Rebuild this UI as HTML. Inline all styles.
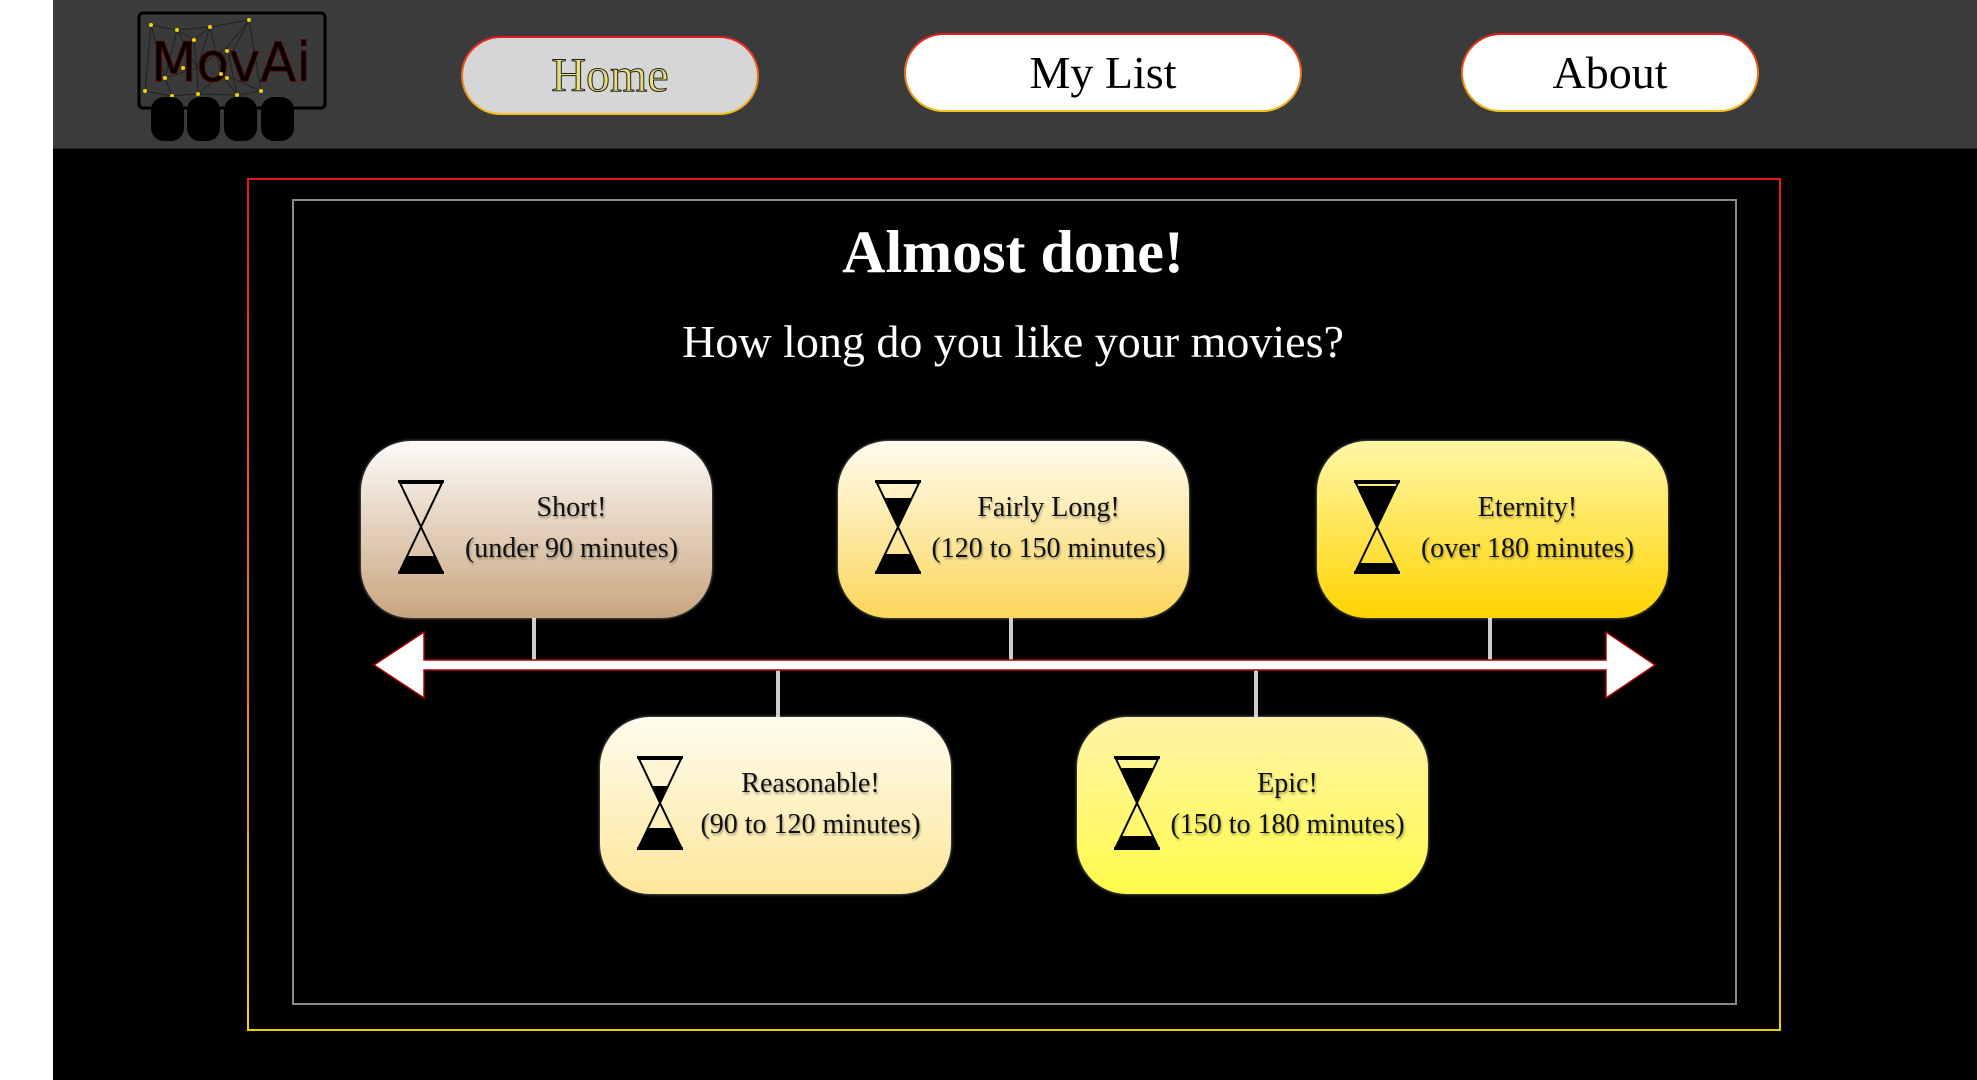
<!DOCTYPE html>
<html><head><meta charset="utf-8"><style>
*{margin:0;padding:0;box-sizing:border-box}
body{width:1977px;height:1080px;background:#000;position:relative;overflow:hidden;font-family:"Liberation Serif",serif}
.abs{position:absolute}
#white{left:0;top:0;width:53px;height:1080px;background:#fff}
#hdr{left:53px;top:0;width:1924px;height:149px;background:#3b3b3b;border-bottom:1px solid #222}
.btn{position:absolute;border-radius:40px;display:flex;align-items:center;justify-content:center;font-size:46px;color:#000;border:2px solid transparent}
.card{position:absolute;width:351px;height:177px;border-radius:50px;box-shadow:0 0 3px #fff8}
.card svg{position:absolute;left:37px;top:39px}
.card .t{position:absolute;left:70px;right:0;top:46px;text-align:center;font-size:28px;line-height:41px;color:#111;text-shadow:1px 2px 2px rgba(0,0,0,.35)}
.conn{position:absolute;width:4px;background:#ccc}
</style></head><body>
<div id="white" class="abs"></div>
<div id="hdr" class="abs"></div>
<!-- logo -->
<svg class="abs" style="left:137px;top:11px" width="192" height="132" viewBox="0 0 192 132">
<rect x="2" y="2" width="186" height="95" rx="4" fill="#3a3a3a" stroke="#000" stroke-width="3"/>
<g stroke="#222" stroke-width="1" fill="none">
<polyline points="14,14 40,19 73,16 112,9 124,80 100,84 61,83 35,85 8,80 14,14 28,67 40,19 60,57 73,16 84,63 112,9 90,36 100,84 84,63 61,83 60,57 28,67 35,85"/>
<polyline points="40,19 57,29 73,16 57,29 60,57 90,36 84,63 90,65 124,80"/>
</g>
<text x="14" y="70" font-family="DejaVu Sans" font-size="54" fill="#000" stroke="#5a0000" stroke-width="1" textLength="160" lengthAdjust="spacingAndGlyphs">MovAi</text>
<g fill="#f2d000"><circle cx="14" cy="14" r="2"/><circle cx="40" cy="19" r="2"/><circle cx="73" cy="16" r="2"/><circle cx="112" cy="9" r="2"/><circle cx="57" cy="29" r="2"/><circle cx="90" cy="40" r="2"/><circle cx="46" cy="57" r="2"/><circle cx="28" cy="67" r="2"/><circle cx="84" cy="63" r="2"/><circle cx="90" cy="67" r="2"/><circle cx="8" cy="80" r="2"/><circle cx="35" cy="85" r="2"/><circle cx="61" cy="83" r="2"/><circle cx="100" cy="84" r="2"/><circle cx="124" cy="80" r="2"/></g>
<rect x="14" y="86" width="33" height="44" rx="13" fill="#000"/><rect x="50" y="86" width="33" height="44" rx="13" fill="#000"/><rect x="87" y="86" width="33" height="44" rx="13" fill="#000"/><rect x="124" y="86" width="33" height="44" rx="13" fill="#000"/>
</svg>
<div class="btn" style="left:461px;top:36px;width:298px;height:79px;background:linear-gradient(#d6d6d6,#d6d6d6) padding-box,linear-gradient(#e51b1b,#f2c31b) border-box;color:#e9dc7a;-webkit-text-stroke:1px #222;font-size:48px">Home</div>
<div class="btn" style="left:904px;top:33px;width:398px;height:79px;background:linear-gradient(#fff,#fff) padding-box,linear-gradient(#e51b1b,#f2c31b) border-box">My List</div>
<div class="btn" style="left:1461px;top:33px;width:298px;height:79px;background:linear-gradient(#fff,#fff) padding-box,linear-gradient(#e51b1b,#f2c31b) border-box">About</div>
<div class="abs" style="left:247px;top:178px;width:1534px;height:853px;border:2px solid;border-image:linear-gradient(#e51b1b,#f2d000) 1"></div>
<div class="abs" style="left:292px;top:199px;width:1445px;height:806px;border:2px solid #8a8a8a"></div>
<div class="abs" style="left:0;width:2026px;top:218px;text-align:center;color:#fff;font-size:60px;font-weight:bold">Almost done!</div>
<div class="abs" style="left:0;width:2026px;top:315px;text-align:center;color:#fff;font-size:46px">How long do you like your movies?</div>
<div class="conn" style="left:532px;top:617px;height:48px"></div>
<div class="conn" style="left:1009px;top:617px;height:48px"></div>
<div class="conn" style="left:1488px;top:617px;height:48px"></div>
<div class="conn" style="left:776px;top:665px;height:52px"></div>
<div class="conn" style="left:1254px;top:665px;height:52px"></div>
<svg class="abs" style="left:0;top:0" width="1977" height="1080">
<polygon points="374,665 424,632 424,660 1606,660 1606,632 1655,665 1606,698 1606,670 424,670 424,698" fill="#fff" stroke="#a00" stroke-width="1.5"/>
</svg>
<div id="cards"></div>
<script>
var cards=[
[361,441,"#fdfbf8","#c9a57f","Short!","(under 90 minutes)",44,76],
[838,441,"#fffcf0","#fbd65a","Fairly Long!","(120 to 150 minutes)",18,74],
[1317,441,"#fff7a8","#ffd400","Eternity!","(over 180 minutes)",6,83],
[600,717,"#fffcee","#fde79a","Reasonable!","(90 to 120 minutes)",30,72],
[1077,717,"#fff4a8","#fffb4a","Epic!","(150 to 180 minutes)",12,80]];
var h="";
cards.forEach(function(c){
var yt=c[6],yb=c[7],wt=21*(47-yt)/44,wb=21*(yb-47)/44;
var svg='<svg width="46" height="94" viewBox="0 0 46 94">'+
'<polygon points="'+(23-wt)+','+yt+' '+(23+wt)+','+yt+' 23,47" fill="#000"/>'+
'<polygon points="'+(23-wb)+','+yb+' '+(23+wb)+','+yb+' 44,91 2,91" fill="#000"/>'+
'<path d="M2,3 L44,3 L23,47 L44,91 L2,91 L23,47 Z" fill="none" stroke="#000" stroke-width="2"/>'+
'<rect x="0" y="0" width="46" height="3" fill="#000"/><rect x="0" y="91" width="46" height="3" fill="#000"/></svg>';
h+='<div class="card" style="left:'+c[0]+'px;top:'+c[1]+'px;background:linear-gradient('+c[2]+','+c[3]+')">'+svg+'<div class="t">'+c[4]+'<br>'+c[5]+'</div></div>';
});
document.getElementById("cards").innerHTML=h;
</script>
</body></html>
